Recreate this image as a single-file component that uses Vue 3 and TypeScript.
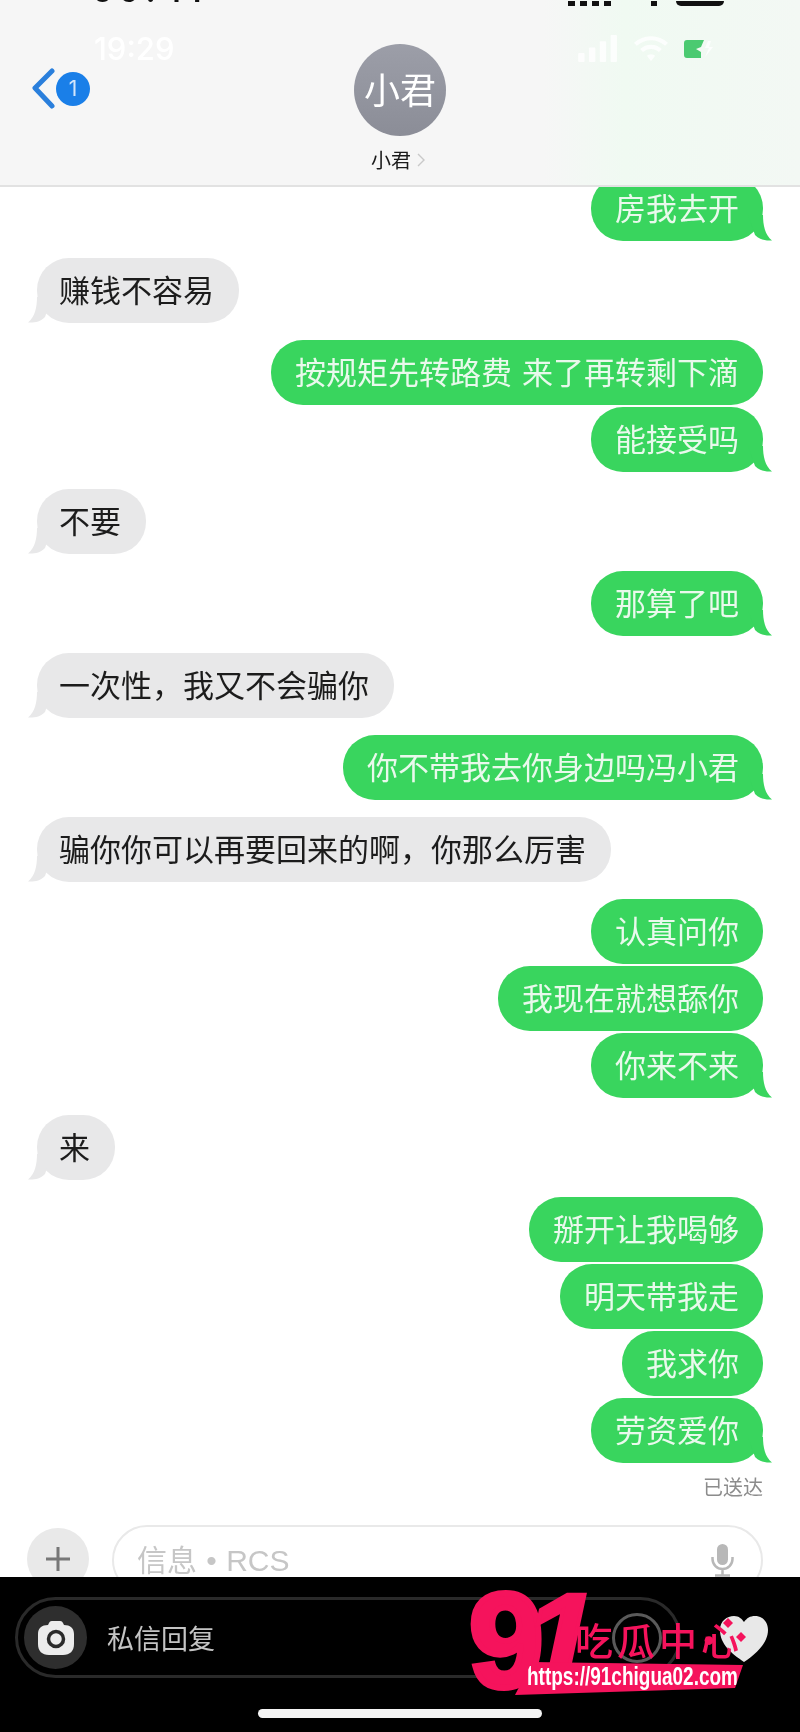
<template>
  <div class="page">
    <header class="top">
      <div class="clipped-status">
        <span class="clipped-time">09:41</span>
        <span class="clipped-right">
          <i class="stub" v-for="n in 4" :key="n"></i>
          <i class="stub wifi"></i>
          <i class="stub battery"></i>
        </span>
      </div>
      <div class="ghost-status">
        <span class="ghost-time">19:29</span>
        <span class="ghost-icons">
          <svg width="40" height="27" viewBox="0 0 44 30" fill="#fff">
            <rect x="0" y="20" width="7" height="10" rx="1" />
            <rect x="12" y="14" width="7" height="16" rx="1" />
            <rect x="24" y="7" width="7" height="23" rx="1" />
            <rect x="36" y="0" width="7" height="30" rx="1" />
          </svg>
          <svg width="36" height="27" viewBox="0 0 34 26" fill="none" stroke="#fff" stroke-width="4">
            <path d="M2 9a22 22 0 0 1 30 0" />
            <path d="M8 15a13 13 0 0 1 18 0" />
            <path d="M17 25l-4-5a6 6 0 0 1 8 0z" fill="#fff" stroke="none" />
          </svg>
          <svg width="32" height="20" viewBox="0 0 32 20">
            <path d="M3 1h17l-3 7-5 2 5 3v6H3a3 3 0 0 1-3-3V4a3 3 0 0 1 3-3z" fill="#2fc25b" />
            <path d="M24 2l-3 7h4l-4 9 8-10h-4l2-6z" fill="#fff" />
          </svg>
        </span>
      </div>
      <div class="nav">
        <div class="back">
          <svg width="24" height="42" viewBox="0 0 24 42" fill="none" stroke="#2a7fdc" stroke-width="5" stroke-linecap="round" stroke-linejoin="round">
            <path d="M21 3L4 20l17 18" />
          </svg>
          <span class="badge">1</span>
        </div>
        <div class="contact">
          <div class="avatar">小君</div>
          <div class="name">
            小君
            <svg width="9" height="14" viewBox="0 0 9 14" fill="none" stroke="#c9c9c9" stroke-width="1.4">
              <path d="M1 1l6 6-6 6" />
            </svg>
          </div>
        </div>
      </div>
    </header>

    <main class="thread">
      <div v-for="(group, i) in groups" :key="i" class="group" :class="group.side">
        <div v-for="(line, j) in group.lines" :key="j" class="bubble">
          {{ line }}
          <svg v-if="j === group.lines.length - 1" class="tail" width="24" height="26" viewBox="0 0 24 26">
            <path d="M15 0C15 10 17 20 24 25.500C18 26 12 25 7 20L0 0Z" />
          </svg>
        </div>
      </div>
      <div class="delivered">已送达</div>
    </main>

    <div class="composer">
      <div class="plus">
        <svg width="26" height="26" viewBox="0 0 26 26" stroke="#777" stroke-width="3">
          <path d="M13 1v24M1 13h24" />
        </svg>
      </div>
      <div class="field">
        <span class="placeholder">信息 • RCS</span>
        <svg width="24" height="34" viewBox="0 0 24 34" fill="none" stroke="#b8b8b8" stroke-width="2.500">
          <rect x="6" y="1" width="11" height="21" rx="5.500" fill="#b8b8b8" stroke="none" />
          <path d="M1.500 14v2a10 10 0 0 0 20 0v-2M11.500 26v6M4 32.500h15" />
        </svg>
      </div>
    </div>

    <footer class="reply-bar">
      <div class="reply-pill">
        <div class="camera">
          <svg width="38" height="38" viewBox="0 0 38 38">
            <path d="M12 4a3 3 0 0 1 3-2h8a3 3 0 0 1 3 2l1 2c6 0 10 3 10 9v10c0 7-4 11-11 11H12C5 36 1 32 1 25V15c0-6 4-9 10-9z" fill="#ececec" />
            <circle cx="19" cy="20" r="7.500" fill="none" stroke="#2a2a2a" stroke-width="3.500" />
          </svg>
        </div>
        <span class="reply-text">私信回复</span>
        <span class="round-btn"></span>
      </div>
      <div class="home-bar"></div>

      <div class="logo">
        <span class="logo-num">9</span>
        <span class="logo-num one">1</span>
        <svg class="logo-heart" width="50" height="48" viewBox="0 0 50 48">
          <path d="M25 47C12 38 1 29 1 15 1 6 8 1 15 1c5 0 8 3 10 6 3-4 6-6 11-6 8 0 13 6 13 14 0 13-12 24-24 32z" fill="#e8e8e8" />
          <path d="M9 3l5 5-5 5-5-5z" fill="#f5135c" />
          <path d="M22 17l5 5-5 5-5-5z" fill="#f5135c" />
        </svg>
        <span class="logo-title">吃瓜中<b class="logo-dot">·</b>心</span>
        <div class="logo-banner"><span>https://91chigua02.com</span></div>
      </div>
    </footer>
  </div>
</template>

<script setup lang="ts">
interface Group {
  side: 'me' | 'them'
  lines: string[]
}

const groups: Group[] = [
  { side: 'me', lines: ['房我去开'] },
  { side: 'them', lines: ['赚钱不容易'] },
  { side: 'me', lines: ['按规矩先转路费 来了再转剩下滴', '能接受吗'] },
  { side: 'them', lines: ['不要'] },
  { side: 'me', lines: ['那算了吧'] },
  { side: 'them', lines: ['一次性，我又不会骗你'] },
  { side: 'me', lines: ['你不带我去你身边吗冯小君'] },
  { side: 'them', lines: ['骗你你可以再要回来的啊，你那么厉害'] },
  { side: 'me', lines: ['认真问你', '我现在就想舔你', '你来不来'] },
  { side: 'them', lines: ['来'] },
  { side: 'me', lines: ['掰开让我喝够', '明天带我走', '我求你', '劳资爱你'] }
]
</script>

<style>
html,
body {
  margin: 0;
  background: #fff;
}
</style>

<style scoped>
.page {
  width: 800px;
  height: 1732px;
  display: flex;
  flex-direction: column;
  overflow: hidden;
  background: #fff;
  font-family: "Noto Sans CJK SC", "Liberation Sans", sans-serif;
  filter: blur(0.4px);
}

.top {
  position: relative;
  z-index: 2;
  flex: none;
  height: 187px;
  box-sizing: border-box;
  border-bottom: 2px solid #e2e2e2;
  background: linear-gradient(90deg, #f6f6f6 68%, #f0faf2 78%, #f3f8f4 100%);
}

.clipped-status {
  height: 6px;
  overflow: hidden;
  display: flex;
  justify-content: space-between;
  align-items: flex-end;
  padding: 0 76px 0 92px;
}

.clipped-time {
  font: 600 32px/1 "Inter", sans-serif;
  letter-spacing: 6px;
  color: #111;
  height: 6px;
  line-height: 0;
  transform: translateY(-9px);
}

.clipped-right {
  display: flex;
  align-items: flex-end;
  gap: 5px;
}

.stub {
  width: 7px;
  height: 5px;
  background: #111;
}

.stub.wifi {
  width: 6px;
  margin: 0 14px 0 35px;
}

.stub.battery {
  width: 48px;
  border-radius: 0 0 8px 8px;
}

.ghost-status {
  position: absolute;
  top: 33px;
  left: 94px;
  right: 84px;
  display: flex;
  justify-content: space-between;
  align-items: center;
}

.ghost-time {
  font: 500 31px/1 "Inter", sans-serif;
  color: #fff;
}

.ghost-icons {
  display: flex;
  align-items: center;
  gap: 15px;
  opacity: 0.85;
}

.nav {
  display: grid;
  grid-template-columns: 1fr auto 1fr;
  padding-top: 38px;
}

.back {
  display: flex;
  align-items: center;
  align-self: start;
  margin: 24px 0 0 31px;
}

.badge {
  width: 34px;
  height: 34px;
  border-radius: 50%;
  background: #1a7fe8;
  color: #d3e6fb;
  font: 400 21px/34px "Inter", sans-serif;
  text-align: center;
  margin-left: 1px;
}

.contact {
  display: flex;
  flex-direction: column;
  align-items: center;
}

.avatar {
  width: 92px;
  height: 92px;
  border-radius: 50%;
  background: linear-gradient(#9c9ea8, #8b8d97);
  color: #fff;
  font-size: 36px;
  line-height: 88px;
  text-align: center;
}

.name {
  display: flex;
  align-items: center;
  gap: 6px;
  margin: 11px 0 0 -3px;
  font-size: 20px;
  line-height: 26px;
  color: #1a1a1a;
}

.thread {
  flex: 1;
  margin-top: -11px;
  padding: 0 37px;
  display: flex;
  flex-direction: column;
  gap: 17px;
  overflow: hidden;
}

.group {
  display: flex;
  flex-direction: column;
  gap: 2px;
}

.group.me {
  align-items: flex-end;
}

.group.them {
  align-items: flex-start;
}

.bubble {
  position: relative;
  height: 65px;
  box-sizing: border-box;
  padding: 0 24px;
  border-radius: 32px;
  font-size: 31px;
  line-height: 62px;
  word-spacing: 3px;
  white-space: nowrap;
}

.me .bubble {
  background: #39d55e;
  color: #e9f9ec;
}

.them .bubble {
  padding: 0 25px 0 22px;
  background: #e8e8e9;
  color: #1c1c1c;
}

.tail {
  position: absolute;
  bottom: 0;
}

.me .tail {
  right: -9px;
  fill: #39d55e;
}

.them .tail {
  left: -9px;
  transform: scaleX(-1);
  fill: #e8e8e9;
}

.delivered {
  align-self: flex-end;
  margin-top: -6px;
  font-size: 20px;
  line-height: 26px;
  color: #8c8c8c;
}

.composer {
  flex: none;
  height: 52px;
  overflow: hidden;
  display: flex;
  gap: 23px;
  padding: 0 37px 0 27px;
}

.plus {
  flex: none;
  width: 62px;
  height: 62px;
  margin-top: 3px;
  border-radius: 50%;
  background: #e9e9e9;
  display: flex;
  align-items: center;
  justify-content: center;
}

.field {
  flex: 1;
  height: 70px;
  box-sizing: border-box;
  border: 2px solid #e9e9e9;
  border-radius: 35px;
  padding: 0 26px 0 23px;
  display: flex;
  align-items: center;
  justify-content: space-between;
}

.placeholder {
  padding-bottom: 5px;
  font-family: "Liberation Sans", "Noto Sans CJK SC", sans-serif;
  font-size: 30px;
  word-spacing: 1px;
  color: #c6c6c6;
}

.reply-bar {
  position: relative;
  z-index: 2;
  flex: none;
  height: 155px;
  box-sizing: border-box;
  padding: 20px 119px 0 15px;
  background: #000;
}

.reply-pill {
  height: 81px;
  box-sizing: border-box;
  border: 3px solid #2a2a2a;
  border-radius: 41px;
  padding: 0 16px 0 6px;
  display: flex;
  align-items: center;
}

.camera {
  width: 63px;
  height: 63px;
  border-radius: 50%;
  background: #2e2e2e;
  display: flex;
  align-items: center;
  justify-content: center;
}

.reply-text {
  margin-left: 20px;
  font-size: 27px;
  color: #c4c4c4;
}

.round-btn {
  width: 44px;
  height: 44px;
  margin-left: auto;
  border: 3px solid #5a5a5a;
  border-radius: 50%;
}

.home-bar {
  width: 284px;
  height: 9px;
  margin: 31px auto 0 243px;
  border-radius: 5px;
  background: #f4f4f4;
}

.logo {
  position: absolute;
  left: 469px;
  top: 8px;
  width: 300px;
  height: 112px;
}

.logo-num {
  position: absolute;
  left: 0;
  top: -24px;
  font: 700 134px/1.2 "Liberation Sans", sans-serif;
  color: #f5135c;
  -webkit-text-stroke: 6px #f5135c;
}

.logo-num.one {
  left: 56px;
  transform: skewX(-12deg);
  -webkit-text-stroke-width: 4px;
}

.logo-title {
  position: absolute;
  left: 106px;
  top: 30px;
  font-size: 38px;
  font-weight: 500;
  line-height: 48px;
  letter-spacing: 4px;
  color: #f5135c;
  white-space: nowrap;
}

.logo-dot {
  font-weight: 500;
  margin: 0 -31px 0 -11px;
}

.logo-heart {
  position: absolute;
  left: 250px;
  top: 30px;
}

.logo-banner {
  position: absolute;
  left: 46px;
  top: 77px;
  width: 228px;
  height: 33px;
  background: #f5135c;
  clip-path: polygon(17px 0, 100% 3px, 220px 26px, 0 33px);
}

.logo-banner span {
  display: block;
  margin: -1px 0 0 12px;
  font: 700 26px/30px "Liberation Sans", sans-serif;
  color: #fff;
  white-space: nowrap;
  transform: scaleX(0.73);
  transform-origin: left center;
}
</style>
